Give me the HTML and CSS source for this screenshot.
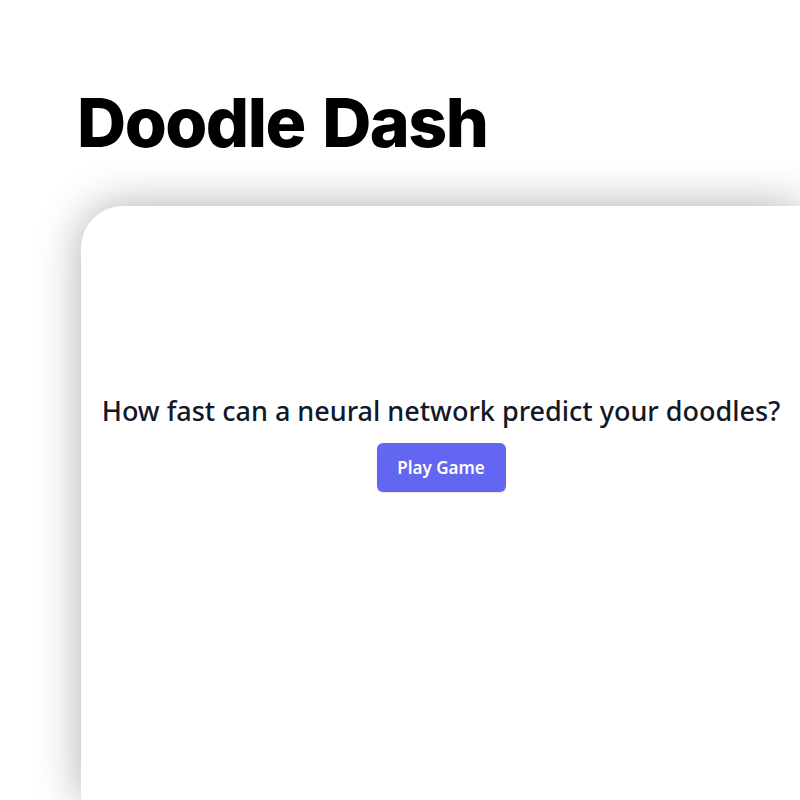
FILE: index.html
```html
<!DOCTYPE html>
<html lang="en">
<head>
    <meta charset="UTF-8">
    <meta name="viewport" content="width=device-width, initial-scale=1.0">
    <title>Doodle Dash</title>
    <link rel="stylesheet" href="styles.css">
</head>
<body>
    <h1 class="title">Doodle Dash</h1>

    <div class="card">
        <p class="question">How fast can a neural network predict your doodles?</p>
        <button class="play-btn">Play Game</button>
    </div>
</body>
</html>
```

FILE: styles.css
```css
body {
    margin: 0;
    background: #ffffff;
    overflow: hidden;
    height: 800px;
}
.title {
    margin: 0;
    padding: 84px 0 0 77px;
    font-family: Inter, "Liberation Sans", sans-serif;
    font-weight: 800;
    font-size: 68px;
    line-height: 76px;
    color: #000;
    letter-spacing: -1.5px;
    word-spacing: 4px;
}
.card {
    margin: 46px 0 0 81px;
    width: 720px;
    height: 594px;
    background: #fff;
    border-radius: 42px 0 0 0;
    box-shadow: 0 0 45px rgba(0,0,0,0.32);
    display: flex;
    flex-direction: column;
    align-items: center;
    padding-top: 186px;
    box-sizing: border-box;
}
.question {
    margin: 0 0 14px 0;
    font-family: "Noto Sans", "Open Sans", sans-serif;
    font-size: 27px;
    font-weight: 500;
    color: #111827;
}
.play-btn {
    background: #6366f1;
    color: #fff;
    border: none;
    border-radius: 6px;
    width: 129px;
    height: 49px;
    font-family: "Noto Sans", "Open Sans", sans-serif;
    font-size: 17px;
    font-weight: 600;
    cursor: pointer;
    box-shadow: 0 1px 2px rgba(0,0,0,0.1);
}
```
